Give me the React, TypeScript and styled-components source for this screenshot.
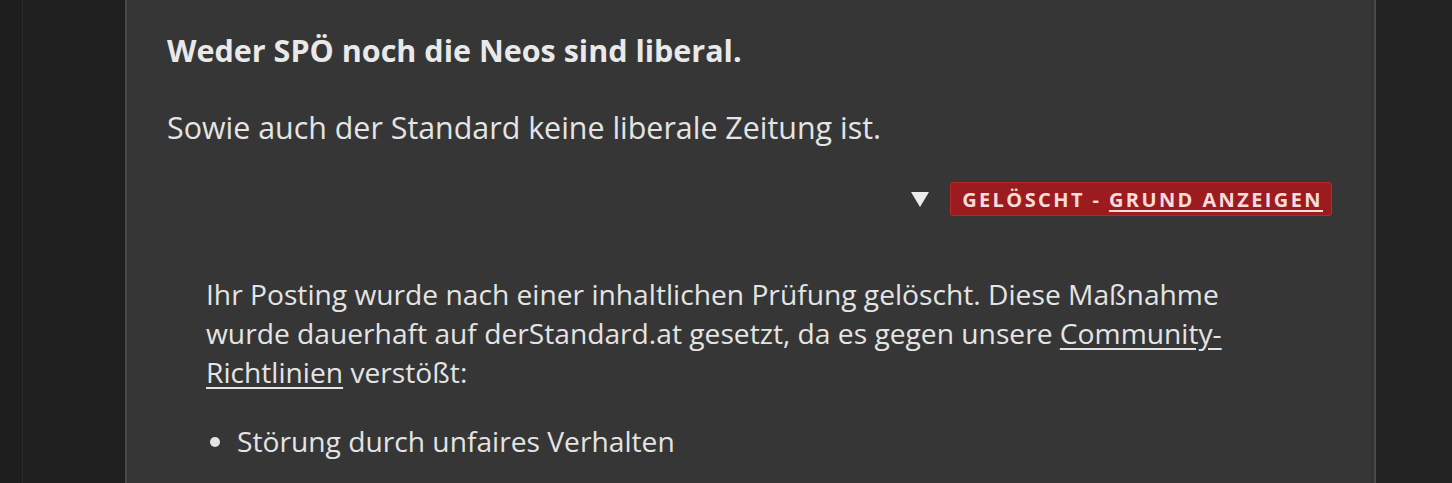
import React, { useState } from 'react';
import styled, { createGlobalStyle } from 'styled-components';

const GlobalStyle = createGlobalStyle`
    html, body {
        margin: 0;
        padding: 0;
        background: #222222;
        font-family: "Open Sans", "Noto Sans", "Liberation Sans", sans-serif;
    }
`;

const Page = styled.div`
    display: flex;
    height: 100vh;
    overflow: hidden;
    background: #222222;
`;

const Rail = styled.div`
    width: 22px;
    background: #1e1e1e;
    border-right: 1px solid #2b2b2b;
`;

const Gutter = styled.div`
    width: 102px;
    background: #1f1f1f;
`;

const Posting = styled.article`
    flex: 1;
    display: flex;
    flex-direction: column;
    background: #363636;
    border-left: 2px solid #4a4a4a;
    border-right: 2px solid #4b4b4b;
    box-shadow: inset -3px 0 0 #323232;
    padding: 30px 42px 0 40px;
    color: #e8e8e8;
`;

const Aside = styled.div`
    width: 76px;
    background: #222222;
`;

const Title = styled.h3`
    margin: 0;
    font-size: 30.5px;
    font-weight: 700;
    line-height: 40px;
    color: #e9e9e9;
`;

const Body = styled.p`
    margin: 38px 0 0;
    font-size: 30.4px;
    line-height: 40px;
    color: #e4e4e4;
`;

const StatusRow = styled.div`
    display: flex;
    justify-content: flex-end;
    align-items: center;
    gap: 21px;
    margin-top: 34px;
`;

const Toggle = styled.button`
    border: 0;
    background: transparent;
    padding: 0;
    cursor: pointer;
    display: flex;
`;

const Badge = styled.span`
    display: inline-flex;
    align-items: center;
    height: 34px;
    box-sizing: border-box;
    padding: 0 8px 0 11px;
    background: #9c1b1f;
    border: 1px solid #b3292c;
    border-radius: 3px;
    color: #f8dcdc;
    font-size: 20px;
    font-weight: 700;
    letter-spacing: 2.4px;
    text-transform: uppercase;
    white-space: pre;
    a {
        color: inherit;
        text-decoration: underline;
        text-underline-offset: 3px;
        text-decoration-thickness: 2px;
    }
`;

const Reason = styled.div`
    margin: 59px 0 0 39px;
    max-width: 1050px;
    font-size: 28.2px;
    line-height: 39px;
    color: #e4e4e4;
    p {
        margin: 0;
    }
    a {
        color: inherit;
        text-decoration: underline;
        text-underline-offset: 4px;
    }
`;

const Reasons = styled.ul`
    margin: 30px 0 0;
    padding-left: 31px;
    li {
        line-height: 39px;
    }
`;

const reasons = ['Störung durch unfaires Verhalten'];

const App: React.FC = () => {
    const [open, setOpen] = useState(true);
    return (
        <>
            <GlobalStyle />
            <Page>
                <Rail />
                <Gutter />
                <Posting>
                    <Title>Weder SPÖ noch die Neos sind liberal.</Title>
                    <Body>Sowie auch der Standard keine liberale Zeitung ist.</Body>
                    <StatusRow>
                        <Toggle onClick={() => setOpen(!open)} aria-label="Grund anzeigen">
                            <svg width="18" height="15" viewBox="0 0 18 15">
                                <path d={open ? 'M0 0 H18 L9 15 Z' : 'M0 0 L15 7.5 L0 15 Z'} fill="#ededed" />
                            </svg>
                        </Toggle>
                        <Badge>
                            Gelöscht - <a href="#grund">Grund anzeigen</a>
                        </Badge>
                    </StatusRow>
                    {open && (
                        <Reason>
                            <p>
                                Ihr Posting wurde nach einer inhaltlichen Prüfung gelöscht. Diese Maßnahme
                                wurde dauerhaft auf derStandard.at gesetzt, da es gegen unsere{' '}
                                <a href="#richtlinien">Community-Richtlinien</a> verstößt:
                            </p>
                            <Reasons>
                                {reasons.map((r, i) => (
                                    <li key={i}>{r}</li>
                                ))}
                            </Reasons>
                        </Reason>
                    )}
                </Posting>
                <Aside />
            </Page>
        </>
    );
};

export default App;
